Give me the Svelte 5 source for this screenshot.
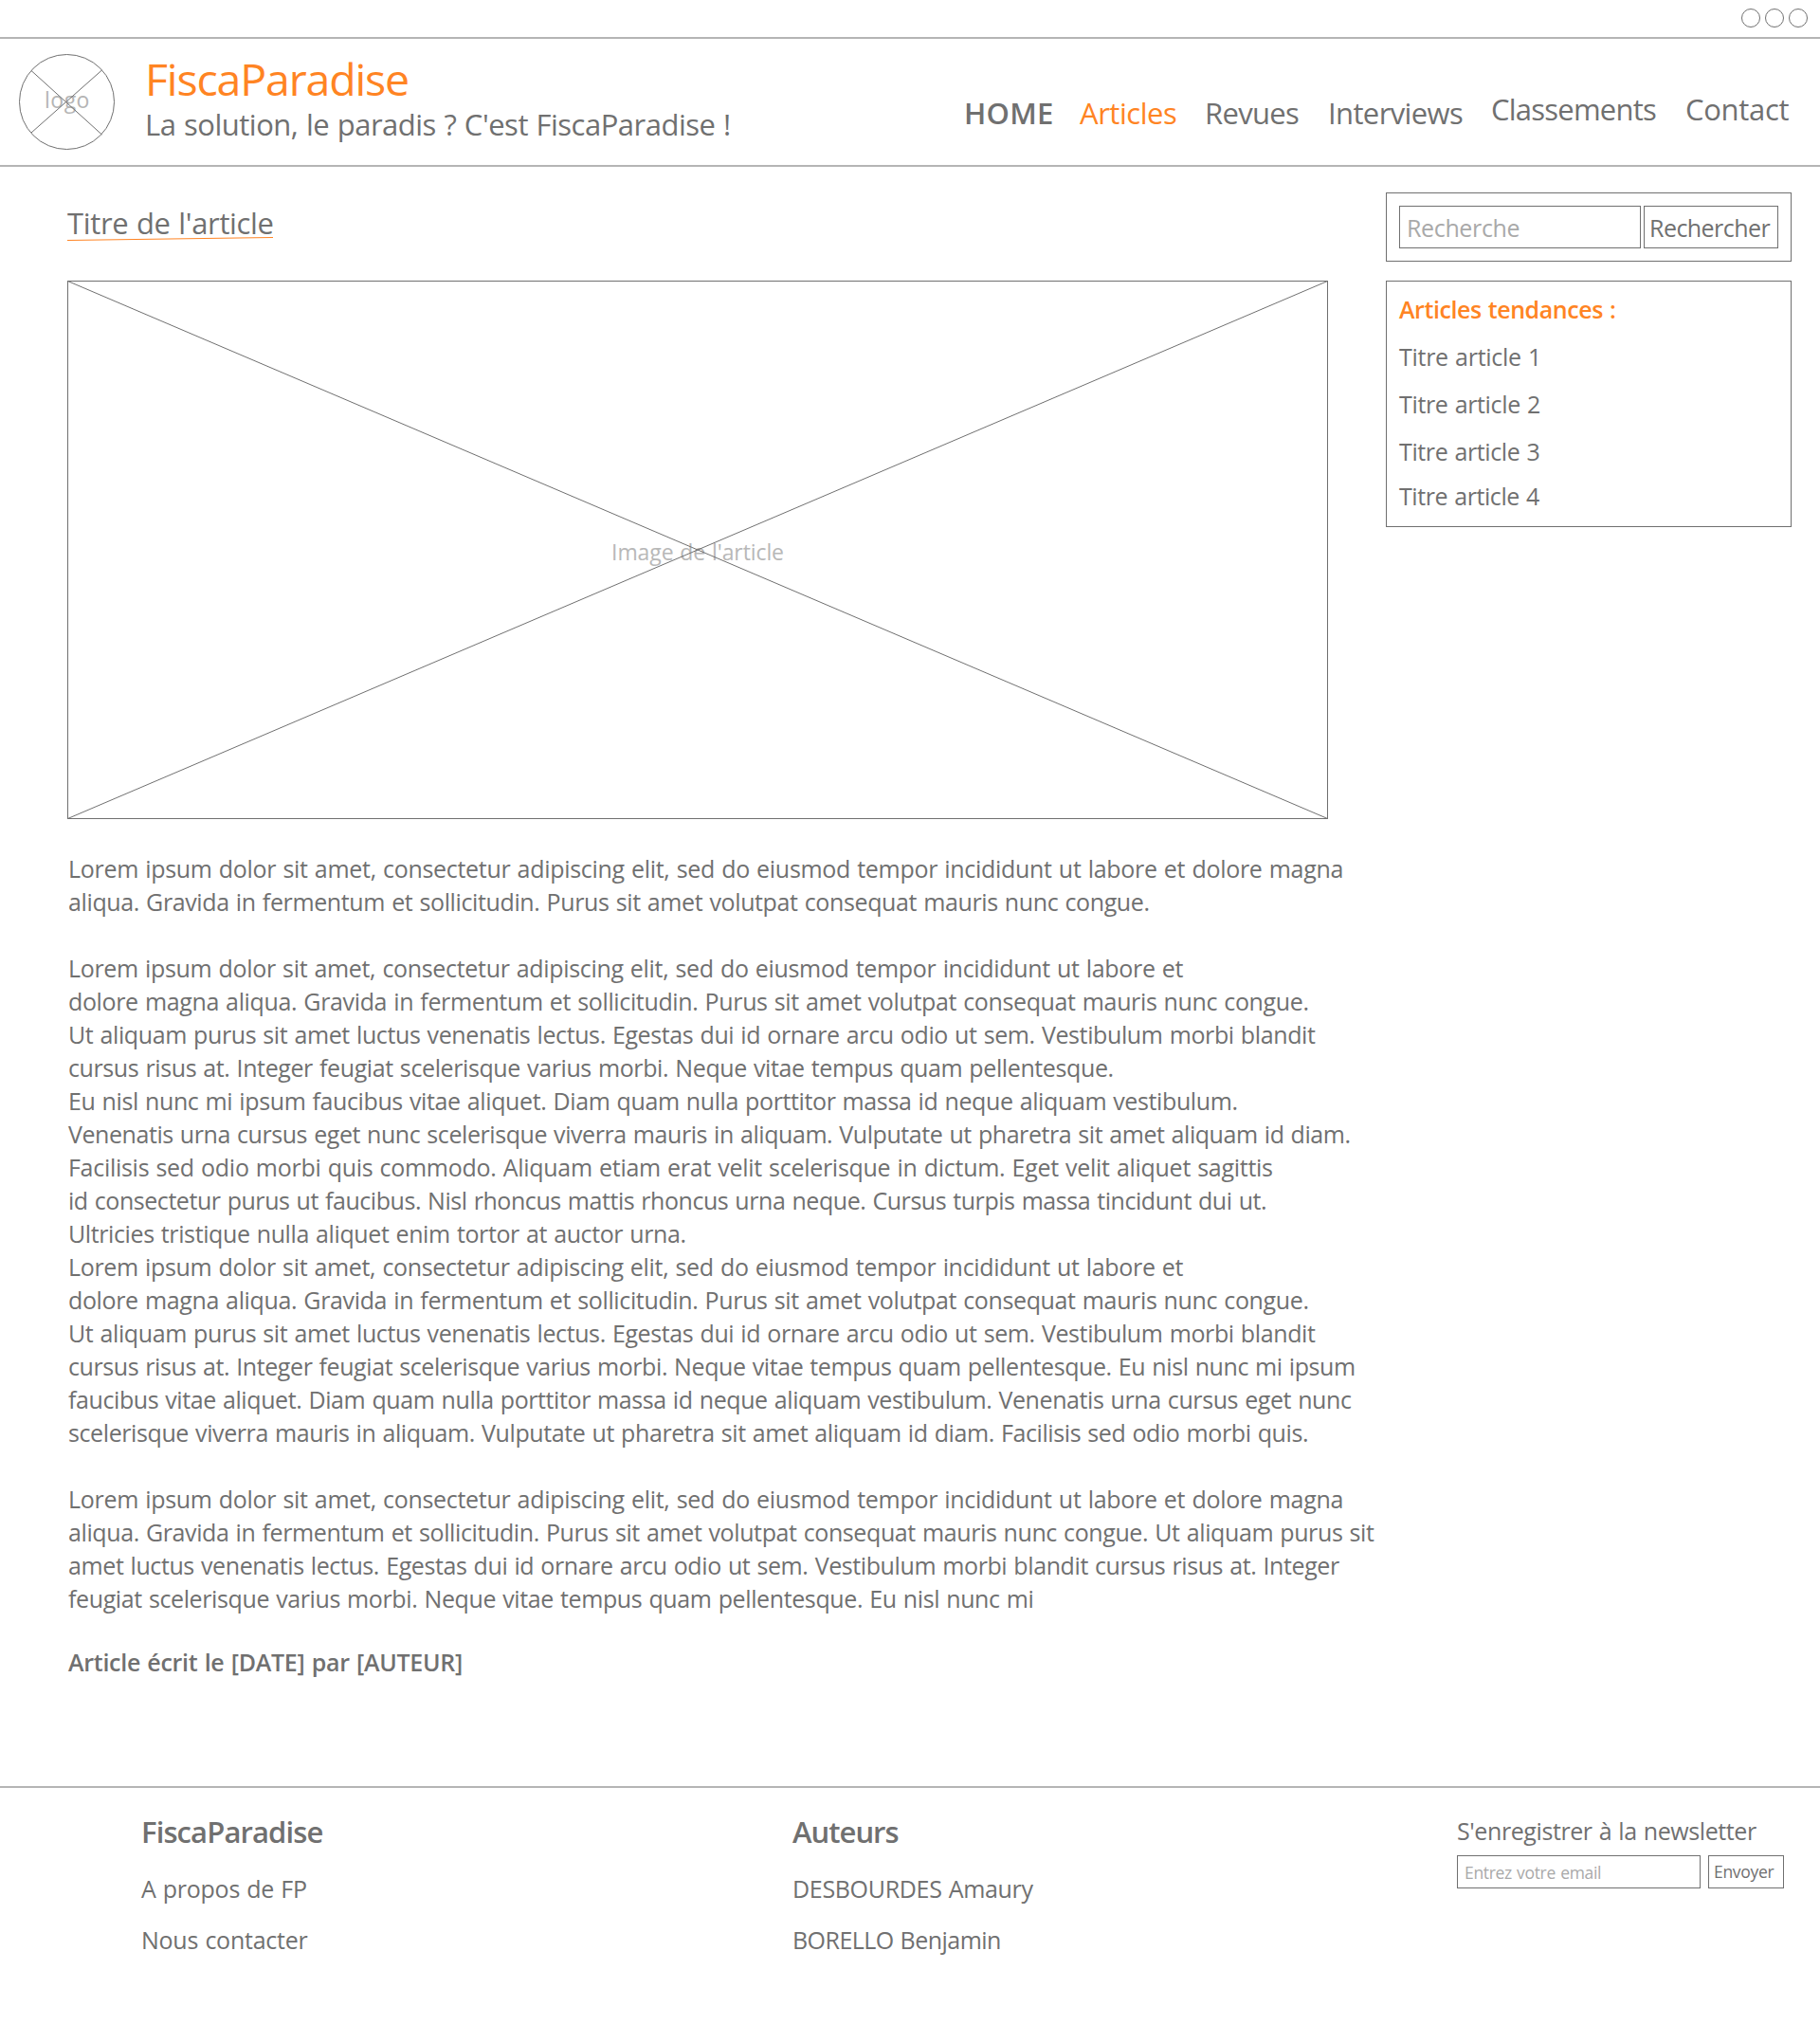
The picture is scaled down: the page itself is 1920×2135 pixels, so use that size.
<script>
  const nav = [
    { label: 'HOME', width: 91, kind: 'strong' },
    { label: 'Articles', width: 102, kind: 'active' },
    { label: 'Revues', width: 96, kind: '' },
    { label: 'Interviews', width: 139, kind: '' },
    { label: 'Classements', width: 173, kind: 'raised' },
    { label: 'Contact', width: 108.5, kind: 'raised' }
  ];

  const trends = [
    { label: 'Titre article 1', width: 145 },
    { label: 'Titre article 2', width: 148 },
    { label: 'Titre article 3', width: 147.5 },
    { label: 'Titre article 4', width: 148 }
  ];

  // Each paragraph is a list of [text, set width] lines.
  const paragraphs = [
    [
      ['Lorem ipsum dolor sit amet, consectetur adipiscing elit, sed do eiusmod tempor incididunt ut labore et dolore magna', 1341.5],
      ['aliqua. Gravida in fermentum et sollicitudin. Purus sit amet volutpat consequat mauris nunc congue.', 1138.5]
    ],
    [
      ['Lorem ipsum dolor sit amet, consectetur adipiscing elit, sed do eiusmod tempor incididunt ut labore et', 1174.5],
      ['dolore magna aliqua. Gravida in fermentum et sollicitudin. Purus sit amet volutpat consequat mauris nunc congue.', 1306.5],
      ['Ut aliquam purus sit amet luctus venenatis lectus. Egestas dui id ornare arcu odio ut sem. Vestibulum morbi blandit', 1314],
      ['cursus risus at. Integer feugiat scelerisque varius morbi. Neque vitae tempus quam pellentesque.', 1100.5],
      ['Eu nisl nunc mi ipsum faucibus vitae aliquet. Diam quam nulla porttitor massa id neque aliquam vestibulum.', 1230.5],
      ['Venenatis urna cursus eget nunc scelerisque viverra mauris in aliquam. Vulputate ut pharetra sit amet aliquam id diam.', 1351.5],
      ['Facilisis sed odio morbi quis commodo. Aliquam etiam erat velit scelerisque in dictum. Eget velit aliquet sagittis', 1268],
      ['id consectetur purus ut faucibus. Nisl rhoncus mattis rhoncus urna neque. Cursus turpis massa tincidunt dui ut.', 1262],
      ['Ultricies tristique nulla aliquet enim tortor at auctor urna.', 648.5],
      ['Lorem ipsum dolor sit amet, consectetur adipiscing elit, sed do eiusmod tempor incididunt ut labore et', 1174.5],
      ['dolore magna aliqua. Gravida in fermentum et sollicitudin. Purus sit amet volutpat consequat mauris nunc congue.', 1306.5],
      ['Ut aliquam purus sit amet luctus venenatis lectus. Egestas dui id ornare arcu odio ut sem. Vestibulum morbi blandit', 1314],
      ['cursus risus at. Integer feugiat scelerisque varius morbi. Neque vitae tempus quam pellentesque. Eu nisl nunc mi ipsum', 1356],
      ['faucibus vitae aliquet. Diam quam nulla porttitor massa id neque aliquam vestibulum. Venenatis urna cursus eget nunc', 1354],
      ['scelerisque viverra mauris in aliquam. Vulputate ut pharetra sit amet aliquam id diam. Facilisis sed odio morbi quis.', 1306]
    ],
    [
      ['Lorem ipsum dolor sit amet, consectetur adipiscing elit, sed do eiusmod tempor incididunt ut labore et dolore magna', 1341.5],
      ['aliqua. Gravida in fermentum et sollicitudin. Purus sit amet volutpat consequat mauris nunc congue. Ut aliquam purus sit', 1377],
      ['amet luctus venenatis lectus. Egestas dui id ornare arcu odio ut sem. Vestibulum morbi blandit cursus risus at. Integer', 1340],
      ['feugiat scelerisque varius morbi. Neque vitae tempus quam pellentesque. Eu nisl nunc mi', 1017.5]
    ]
  ];

  const columns = [
    {
      title: 'FiscaParadise',
      width: 189.5,
      items: [
        { label: 'A propos de FP', width: 174 },
        { label: 'Nous contacter', width: 173.5 }
      ]
    },
    {
      title: 'Auteurs',
      width: 111.5,
      items: [
        { label: 'DESBOURDES Amaury', width: 252.5 },
        { label: 'BORELLO Benjamin', width: 217 }
      ]
    }
  ];

  // Tracks the text so that its drawn glyphs span the given width.
  function fit(node, width) {
    const style = getComputedStyle(node);
    const ctx = document.createElement('canvas').getContext('2d');
    ctx.font = `${style.fontWeight} ${style.fontSize} ${style.fontFamily}`;
    const text = node.textContent.trim();
    const m = ctx.measureText(text);
    const spaces = text.split(' ').length - 1;
    const ink = m.actualBoundingBoxRight + m.actualBoundingBoxLeft + spaces * parseFloat(style.wordSpacing);
    node.style.letterSpacing = `${((width - ink) / (text.length - 1)).toFixed(3)}px`;
  }
</script>

<div class="page">
  <div class="window-bar">
    {#each [0, 1, 2] as dot (dot)}<i class="dot"></i>{/each}
  </div>

  <header>
    <div class="logo">
      <span use:fit={45.5}>logo</span>
      <svg viewBox="0 0 102 102">
        <circle cx="50.5" cy="51.5" r="50" />
        <path d="M13 18.5 L87.5 86 M87.5 18 L13 84" />
      </svg>
    </div>
    <div class="brand">
      <h1><span use:fit={273}>FiscaParadise</span></h1>
      <p><span use:fit={613}>La solution, le paradis ? C'est FiscaParadise !</span></p>
    </div>
    <nav>
      {#each nav as item (item.label)}
        <a class={item.kind} use:fit={item.width}>{item.label}</a>
      {/each}
    </nav>
  </header>

  <main>
    <article>
      <h2>
        <span use:fit={216.5}>Titre de l'article</span>
        <svg class="underline" viewBox="0 0 218 6"><path d="M0 4.5 L217 1.5" /></svg>
      </h2>
      <div class="picture">
        <span use:fit={179}>Image de l'article</span>
        <svg viewBox="0 0 1330 568">
          <path d="M0.5 0.5 L1329.5 567.5 M1329.5 0.5 L0.5 567.5" />
          <rect x="0.5" y="0.5" width="1329" height="567" />
        </svg>
      </div>
      {#each paragraphs as lines}
        <p class="copy">
          {#each lines as [text, width]}
            <span use:fit={width}>{text}</span>
          {/each}
        </p>
      {/each}
      <p class="byline"><span use:fit={415}>Article écrit le [DATE] par [AUTEUR]</span></p>
    </article>

    <aside>
      <div class="panel search">
        <div class="field"><span use:fit={116.5}>Recherche</span></div>
        <div class="button"><span use:fit={125.5}>Rechercher</span></div>
      </div>
      <div class="panel trends">
        <h3><span use:fit={228}>Articles tendances :</span></h3>
        <ul>
          {#each trends as t (t.label)}
            <li><span use:fit={t.width}>{t.label}</span></li>
          {/each}
        </ul>
      </div>
    </aside>
  </main>

  <footer>
    {#each columns as col (col.title)}
      <section>
        <h4 use:fit={col.width}>{col.title}</h4>
        {#each col.items as item (item.label)}
          <p><span use:fit={item.width}>{item.label}</span></p>
        {/each}
      </section>
    {/each}
    <section class="newsletter">
      <div class="caption"><span use:fit={315}>S'enregistrer à la newsletter</span></div>
      <div class="signup">
        <div class="field"><span use:fit={142}>Entrez votre email</span></div>
        <div class="button"><span use:fit={62.5}>Envoyer</span></div>
      </div>
    </section>
  </footer>
</div>

<style>
  :global(body) {
    margin: 0;
    background: #fff;
  }
  .page {
    width: 1920px;
    height: 2135px;
    overflow: hidden;
    font: 25px/35px 'Open Sans', 'Noto Sans', sans-serif;
    word-spacing: 1px;
    color: #707070;
    white-space: nowrap;
  }
  .page :is(h1, h2, h3, h4, p, ul) {
    margin: 0;
    padding: 0;
    list-style: none;
  }
  svg {
    display: block;
    fill: none;
    stroke: #707070;
    stroke-width: 1;
  }

  .window-bar {
    box-sizing: border-box;
    height: 41px;
    border-bottom: 2px solid #b5b5b5;
    display: flex;
    justify-content: flex-end;
    gap: 5px;
    padding: 9px 13px 0 0;
  }
  .dot {
    box-sizing: border-box;
    width: 20px;
    height: 20px;
    border: 1px solid #707070;
    border-radius: 50%;
  }

  header {
    box-sizing: border-box;
    height: 135px;
    border-bottom: 2px solid #b5b5b5;
    display: flex;
    padding-left: 20px;
  }
  .logo {
    position: relative;
    width: 102px;
    height: 102px;
    margin-top: 15px;
    font-size: 23px;
    text-align: center;
    color: #b5b5b5;
  }
  .logo span {
    line-height: 99px;
  }
  .logo svg {
    position: absolute;
    inset: 0;
  }
  .brand {
    width: 863px;
    padding: 12px 0 0 31px;
  }
  h1 {
    font-size: 46.5px;
    line-height: 60px;
    font-weight: 400;
    color: #ff8423;
  }
  .brand p {
    font-size: 31px;
    line-height: 36px;
  }
  nav {
    display: grid;
    grid-template-columns: 122px 132px 130px 172px 205px 120px;
    align-items: start;
    padding: 60px 0 0 1px;
    font-size: 31px;
    line-height: 36px;
  }
  nav .strong {
    font-weight: 600;
  }
  nav .active {
    color: #ff8423;
  }
  nav .raised {
    margin-top: -4px;
  }

  main {
    display: flex;
    box-sizing: border-box;
    height: 1708px;
    padding-left: 71px;
  }
  article {
    width: 1391px;
    padding-top: 41px;
  }
  h2 {
    position: relative;
    font-size: 31px;
    line-height: 36px;
    font-weight: 400;
    margin-bottom: 43px !important;
  }
  .underline {
    position: absolute;
    left: 0;
    top: 32px;
    width: 218px;
    height: 6px;
    stroke: #ff8423;
  }
  .picture {
    position: relative;
    display: flex;
    justify-content: center;
    width: 1330px;
    height: 568px;
    font-size: 23px;
    line-height: 572px;
    color: #b8b8b8;
  }
  .picture svg {
    position: absolute;
    inset: 0;
  }
  .copy,
  .byline {
    padding-left: 1px !important;
  }
  .copy {
    padding-top: 35px !important;
  }
  .copy span {
    display: block;
  }
  .byline {
    padding-top: 32px !important;
    font-weight: 600;
  }

  aside {
    width: 428px;
    padding-top: 27px;
  }
  .panel {
    box-sizing: border-box;
    border: 1px solid #707070;
    padding: 13px;
  }
  .search {
    display: flex;
    gap: 3px;
    height: 73px;
    margin-bottom: 20px;
  }
  .field,
  .button {
    box-sizing: border-box;
    border: 1px solid #707070;
  }
  .field {
    color: #a9a9a9;
  }
  .search .field {
    width: 255px;
    height: 45px;
    padding: 5px 0 0 7px;
  }
  .search .button {
    width: 142px;
    height: 45px;
    padding: 5px 0 0 5px;
  }
  .trends {
    height: 260px;
    padding-top: 12px;
  }
  h3 {
    font-size: 25px;
    font-weight: 600;
    color: #ff8423;
  }
  .trends li {
    margin-top: 15px;
  }
  .trends li:last-child {
    margin-top: 12px;
  }

  footer {
    box-sizing: border-box;
    height: 251px;
    border-top: 2px solid #b5b5b5;
    display: grid;
    grid-template-columns: 687px 701px 345px;
    padding: 28px 0 0 149px;
  }
  h4 {
    font-size: 31px;
    line-height: 36px;
    font-weight: 600;
  }
  footer p {
    margin-top: 25px !important;
  }
  footer p + p {
    margin-top: 19px !important;
  }
  .caption {
    margin-bottom: 8px;
  }
  .signup {
    display: flex;
    gap: 8px;
    font-size: 17.5px;
    line-height: 25px;
  }
  .signup .field {
    width: 257px;
    height: 35px;
    padding: 5px 0 0 7px;
  }
  .signup .button {
    width: 80px;
    height: 35px;
    padding: 4px 0 0 5px;
  }
</style>
